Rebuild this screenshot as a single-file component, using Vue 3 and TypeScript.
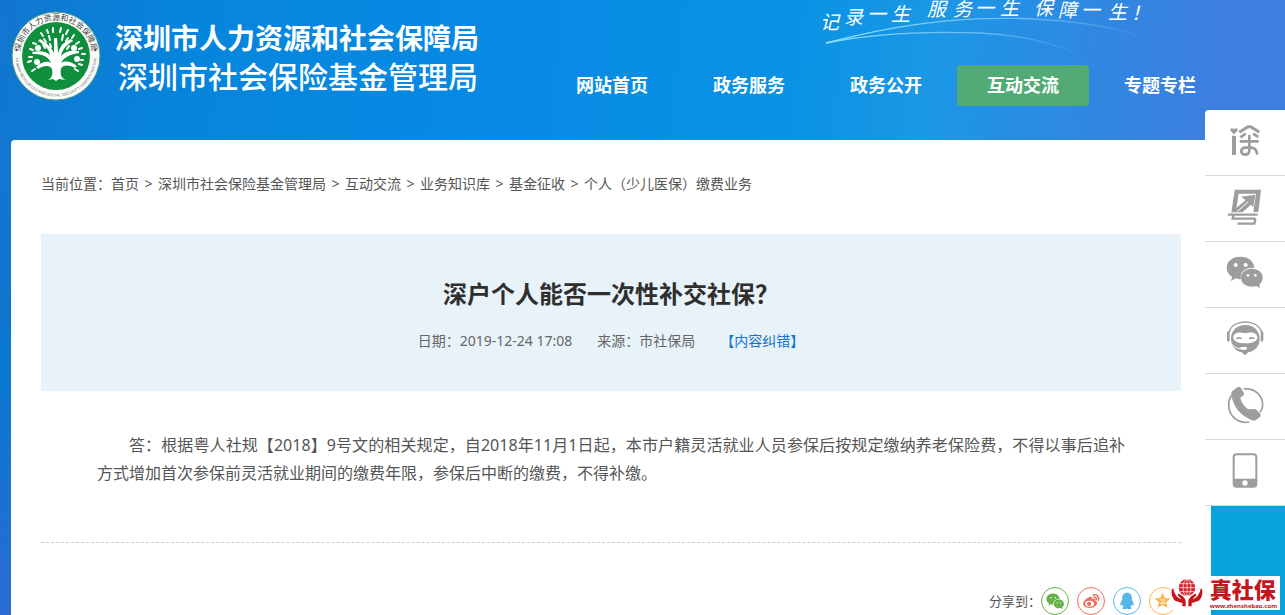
<script setup lang="ts">
interface NavItem {
  label: string
  active: boolean
}

const navItems: NavItem[] = [
  { label: '网站首页', active: false },
  { label: '政务服务', active: false },
  { label: '政务公开', active: false },
  { label: '互动交流', active: true },
  { label: '专题专栏', active: false },
]

const crumbs: string[] = [
  '首页',
  '深圳市社会保险基金管理局',
  '互动交流',
  '业务知识库',
  '基金征收',
  '个人（少儿医保）缴费业务',
]
</script>

<template>
  <div class="page">
    <header class="header">
      <svg class="slogan" viewBox="0 0 340 60" aria-hidden="true">
        <defs>
          <linearGradient id="arcFade" x1="0" x2="1" y1="0" y2="0">
            <stop offset="0" stop-color="#8fe0ff" />
            <stop offset="0.6" stop-color="#7cc4f5" stop-opacity="0.8" />
            <stop offset="1" stop-color="#7cc4f5" stop-opacity="0.1" />
          </linearGradient>
        </defs>
        <g fill="none" stroke="url(#arcFade)" stroke-width="1.3">
          <path d="M6 43C70 26 130 17 200 18.500C250 20 290 26 320 36" />
          <path d="M6 43C60 32 110 31 160 33C200 35 240 44 257 55" />
        </g>
        <text
          class="slogan-text"
          x="0 24 47 71 107 133 155 180 214 238 261 288 311"
          y="29 24 21 21 16 16 15 15 15 17 17 19 20"
        >记录一生服务一生保障一生！</text>
      </svg>

      <div class="brand">
        <svg class="emblem" viewBox="0 0 90 90" role="img" aria-label="深圳市人力资源和社会保障局">
          <defs>
            <path id="ringTop" d="M9 45A36 36 0 0 1 81 45" />
            <path id="ringBottom" d="M4.500 45A40.500 40.500 0 0 0 85.500 45" />
          </defs>
          <circle cx="45" cy="45" r="44" fill="#fbfdfb" stroke="#4d9b7c" stroke-width="1" />
          <circle cx="45" cy="45" r="34" fill="#0f8f3e" />
          <text class="ring-cn"><textPath href="#ringTop" startOffset="50%" text-anchor="middle">深圳市人力资源和社会保障局</textPath></text>
          <text class="ring-en"><textPath href="#ringBottom" startOffset="50%" text-anchor="middle">HUMAN RESOURCES AND SOCIAL SECURITY ADMINISTRATION</textPath></text>
          <circle cx="5.500" cy="39" r="1.200" fill="#445" />
          <circle cx="84.500" cy="39" r="1.200" fill="#445" />
          <path fill="#fff" d="M37 69C41 67 42 63 41 58C39 54 33 54 27 58L25 56C31 50 37 50 40 52C37 45 31 43 22 43L21 41C30 39 36 41 39 44C38 38 33 33 27 30L29 28C36 32 41 37 43 42L43 27L46 27L47 42C49 35 54 30 60 28L62 30C55 34 51 39 50 45C54 40 60 39 68 40L68 42C60 43 53 46 50 52C55 49 61 51 66 55L64 57C57 53 51 54 50 58C49 63 50 67 55 69L48 68L45 70L42 68Z" />
          <g fill="#fff">
            <circle cx="27" cy="37" r="3" /><circle cx="26" cy="51" r="3" />
            <circle cx="63" cy="37" r="3" /><circle cx="66" cy="48" r="3" />
          </g>
          <g fill="none" stroke="#fff" stroke-width="2" stroke-linecap="round">
            <path d="M30 22l2 3M36 19l1 3M42 17l0 4M50 17l-1 4M57 19l-2 4M63 24l-2 3M33 28l2 3M38 25l1 4M52 24l-1 5M57 27l-2 3M18 46l3 0M17 51l3-1M22 32l3 1M68 31l-3 2M71 37l-3 1M74 43l-3 0M71 54l-3-1M19 38l3 1M67 60l-3-2M21 60l3-2M39 33l1 3M52 34l-1 3M34 37l-2-4M58 35l-2 3M72 49l-2 0" />
          </g>
        </svg>
        <div class="brand-names">
          <div class="brand-main">深圳市人力资源和社会保障局</div>
          <div class="brand-sub">深圳市社会保险基金管理局</div>
        </div>
      </div>

      <nav class="nav" aria-label="主导航">
        <a
          v-for="item in navItems"
          :key="item.label"
          href="#"
          class="nav-link"
          :class="{ active: item.active }"
        >{{ item.label }}</a>
      </nav>
    </header>

    <main class="card">
      <nav class="crumbs" aria-label="当前位置">
        <span>当前位置：</span>
        <template v-for="(crumb, index) in crumbs" :key="crumb">
          <span v-if="index > 0" class="crumb-sep">&gt;</span>
          <a href="#">{{ crumb }}</a>
        </template>
      </nav>

      <section class="title-box">
        <h1>深户个人能否一次性补交社保？</h1>
        <div class="meta">
          <span>日期：2019-12-24 17:08</span>
          <span>来源：市社保局</span>
          <a href="#">【内容纠错】</a>
        </div>
      </section>

      <article class="article">
        <p>答：根据粤人社规【2018】9号文的相关规定，自2018年11月1日起，本市户籍灵活就业人员参保后按规定缴纳养老保险费，不得以事后追补方式增加首次参保前灵活就业期间的缴费年限，参保后中断的缴费，不得补缴。</p>
      </article>

      <div class="share">
        <span class="share-label">分享到：</span>
        <div class="share-links">
          <a href="#" class="share-link wechat" aria-label="微信">
            <svg viewBox="0 0 28 28">
              <path fill="currentColor" d="M12 6C7.500 6 4.800 8.800 4.800 12C4.800 14 6 15.600 7.500 16.600L7 19L9.700 17.600L12 18C12 14 15 11.300 19 11.500C18.500 8.300 15.500 6 12 6Z" />
              <path fill="currentColor" d="M18 12.500C14.800 12.500 12.700 14.600 12.700 17.200C12.700 19.800 15 21.800 18.100 21.800L19.900 21.500L22.200 22.600L21.700 20.700C22.900 19.900 23.700 18.600 23.700 17.200C23.700 14.600 21.200 12.500 18 12.500Z" />
              <g fill="#fff"><circle cx="9.800" cy="10.500" r="0.900" /><circle cx="14.200" cy="10.500" r="0.900" /><circle cx="16.400" cy="16" r="0.700" /><circle cx="19.900" cy="16" r="0.700" /></g>
            </svg>
          </a>
          <a href="#" class="share-link weibo" aria-label="微博">
            <svg viewBox="0 0 28 28">
              <path fill="currentColor" d="M12 10C14 9 15.500 9.500 15 11.800C18 11 19 12 18.300 13.500C20 14 21 15 20.500 17C19.500 20 16 21.500 12.500 21.500C8.500 21.500 5.500 19.500 5.500 17C5.500 14.500 8.500 11.500 12 10Z" />
              <ellipse cx="12.500" cy="17" rx="4.800" ry="3.300" fill="#fff" />
              <circle cx="12" cy="17.200" r="2.300" fill="currentColor" />
              <path fill="none" stroke="currentColor" stroke-width="1.800" stroke-linecap="round" d="M16.500 7.500C20.500 6.500 23 9.500 22 13M17 10C19 9.600 20 11 19.600 12.500" />
            </svg>
          </a>
          <a href="#" class="share-link qq" aria-label="QQ">
            <svg viewBox="0 0 28 28">
              <path fill="currentColor" d="M14 5C10.700 5 8.800 7.500 8.800 10.500L8.800 12.800C7.300 14.500 6.500 17 6.800 18.800C7.500 19.200 8.300 18.500 8.800 17.800C9.100 18.900 9.600 19.800 10.300 20.400C8.500 21 8.600 22.700 11 22.700C12.500 22.700 13.500 22.300 14 21.700C14.500 22.300 15.500 22.700 17 22.700C19.400 22.700 19.500 21 17.700 20.400C18.400 19.800 18.900 18.900 19.200 17.800C19.700 18.500 20.500 19.200 21.200 18.800C21.500 17 20.700 14.500 19.200 12.800L19.200 10.500C19.200 7.500 17.300 5 14 5Z" />
            </svg>
          </a>
          <a href="#" class="share-link qzone" aria-label="QQ空间">
            <svg viewBox="0 0 28 28">
              <path fill="currentColor" d="M13.500 5L16 10.700L22 11.300L17.500 15.400L18.800 21.400L13.500 18.300L8.200 21.400L9.500 15.400L5 11.300L11 10.700Z" />
              <path fill="none" stroke="#fff" stroke-width="0.900" d="M10.500 12.800H16L11.500 16.500H17" />
            </svg>
          </a>
        </div>
      </div>
    </main>

    <aside class="tools" aria-label="快捷工具">
      <a href="#" class="tool" aria-label="i深圳">
        <svg viewBox="90 67 120 120">
          <path fill="currentColor" d="M117 101L107 91C103 85 111 79 117 86C123 79 131 85 127 91ZM111 105H123V163H111Z" />
          <g fill="none" stroke="currentColor" stroke-width="9" stroke-linejoin="round">
            <path d="M133 95L154 81Q163 76 172 81L193 95" />
            <path d="M136 110L152 99M174 99L190 109M134 122H191M163 103V150Q162 162 150 162Q139 161 139 151Q140 141 151 141H170Q184 142 187 162" stroke-width="8" />
          </g>
        </svg>
      </a>
      <a href="#" class="tool" aria-label="粤省事">
        <svg viewBox="90 265 120 120">
          <path fill="currentColor" d="M119 267H198L190 334H175L183 279H131L124 326L109 336Z" />
          <path fill="currentColor" d="M181 282L175 320L168 312L142 335H109L152 298L138 288Z" />
          <path fill="none" stroke="#fff" stroke-width="3" d="M126 333L160 303" />
          <path fill="none" stroke="currentColor" stroke-width="7" d="M99 342H188M116 342L113 354H178Q182 355 180 361L178 369H128" />
        </svg>
      </a>
      <a href="#" class="tool" aria-label="微信">
        <svg viewBox="90 463 120 120">
          <path fill="currentColor" d="M137 468C112 468 95 482 95 501C95 513 101 522 111 528L108 541L122 533C127 535 132 536 138 535C133 515 149 500 178 501C176 481 160 468 137 468Z" />
          <path fill="currentColor" d="M171 504C152 504 138 515 138 531C138 547 152 558 171 558C176 558 180 557 184 556L195 562L193 551C200 546 203 539 203 531C203 515 189 504 171 504Z" />
          <g fill="#fff"><circle cx="122" cy="493" r="6" /><circle cx="152" cy="493" r="6" /><circle cx="159" cy="524" r="4" /><circle cx="181" cy="524" r="4" /></g>
        </svg>
      </a>
      <a href="#" class="tool" aria-label="智能客服">
        <svg viewBox="90 61 120 120">
          <path fill="none" stroke="currentColor" stroke-width="4" d="M103 94C110 54 191 54 199 94" />
          <path fill="currentColor" d="M96 96Q96 92 101 91L104 96V121L100 123Q96 122 96 117ZM205 96Q205 92 200 91L197 96V121L201 123Q205 122 205 117Z" />
          <path fill="currentColor" d="M151 73C126 73 108 90 108 115C108 137 122 151 140 155L150 164L160 155C180 151 194 137 194 115C194 90 176 73 151 73Z" />
          <path fill="#fff" d="M151 98C170 92 187 97 187 110C187 123 172 128 151 128C130 128 115 123 115 110C115 97 132 92 151 98Z" />
          <path fill="none" stroke="currentColor" stroke-width="5" stroke-linecap="round" d="M126 113Q132 110 138 113M164 113Q170 110 176 113" />
          <path fill="none" stroke="#fff" stroke-width="3" stroke-linecap="round" d="M108 128Q118 143 136 144H152" />
          <rect x="136" y="139" width="20" height="8" rx="4" fill="#fff" />
        </svg>
      </a>
      <a href="#" class="tool" aria-label="电话">
        <svg viewBox="90 259 120 120">
          <path fill="none" stroke="currentColor" stroke-width="5" d="M146 265C183 260 207 291 202 319C200 327 198 331 195 335M163 364C128 370 101 345 101 313C101 301 104 291 110 284" />
          <path fill="currentColor" d="M113 270L128 259Q134 257 138 262L147 278Q148 283 143 286L136 291Q139 309 158 325L168 326L176 325Q180 324 184 327L196 339Q199 344 195 348L184 357Q177 362 167 357C132 341 113 313 109 282Q108 274 113 270Z" />
        </svg>
      </a>
      <a href="#" class="tool" aria-label="手机版">
        <svg viewBox="90 457 120 120">
          <path fill="currentColor" fill-rule="evenodd" d="M124 458H176Q187 458 187 470V549Q187 561 176 561H124Q113 561 113 549V470Q113 458 124 458ZM125 464Q119 464 119 471V534H181V471Q181 464 175 464Z" />
          <circle cx="150" cy="547" r="8" fill="#fff" />
        </svg>
      </a>
    </aside>

    <a href="#" class="badge">
      <svg class="badge-logo" viewBox="0 0 96 84" aria-hidden="true">
        <circle cx="48" cy="26" r="25" fill="#d4232b" />
        <g fill="none" stroke="#fff" stroke-width="2">
          <path d="M23 26H73M27 14H69M27 38H69M48 1V51" />
          <ellipse cx="48" cy="26" rx="12" ry="25" />
        </g>
        <g fill="#c4161c">
          <path d="M3 29C0 44 3 58 14 66L34 72V82H44V66C43 58 34 50 25 45C21 43 18 47 22 51L31 60C20 58 11 47 7 29Z" />
          <path d="M93 29C96 44 93 58 82 66L62 72V82H52V66C53 58 62 50 71 45C75 43 78 47 74 51L65 60C76 58 85 47 89 29Z" />
        </g>
      </svg>
      <span class="badge-text">
        <strong>真社保</strong>
        <small>www.zhenshebao.com</small>
      </span>
    </a>
  </div>
</template>

<style>
body {
  margin: 0;
}
</style>

<style scoped>
.page {
  position: relative;
  box-sizing: border-box;
  min-height: 100vh;
  display: flex;
  flex-direction: column;
  overflow: hidden;
  font-family: "Noto Sans", "Noto Sans CJK SC", sans-serif;
  color: #555;
  background:
    linear-gradient(180deg, #1377d0 140px, #0d76cb 310px, #0b78d0 380px, #2a6bd0 615px) left / 50% 100% no-repeat,
    #08a2dc;
}

a {
  color: inherit;
  text-decoration: none;
}

.header {
  position: relative;
  box-sizing: border-box;
  min-height: 140px;
  display: flex;
  justify-content: space-between;
  align-items: flex-start;
  padding: 0 59px 0 11px;
  background: linear-gradient(97deg, #1176cf 0%, #0685dc 15%, #078ae5 40%, #0a92e4 62%, #1b98e5 72%, #2f88e2 84%, #3e7ee0 95%, #3e7ee0 100%);
}

.slogan {
  position: absolute;
  top: 0;
  right: 125px;
  width: 340px;
  height: 60px;
}

.slogan-text {
  font-family: "Noto Sans CJK SC", sans-serif;
  font-size: 19px;
  font-style: italic;
  font-weight: 400;
  fill: #fff;
}

.brand {
  display: flex;
  gap: 14px;
  padding-top: 11px;
}

.emblem {
  width: 90px;
  height: 90px;
}

.ring-cn {
  font-family: "Noto Sans CJK SC", sans-serif;
  font-size: 8px;
  fill: #444;
}

.ring-en {
  font-family: "Liberation Sans", sans-serif;
  font-size: 4px;
  fill: #777;
}

.brand-names {
  padding-top: 9px;
  color: #fff;
  white-space: nowrap;
}

.brand-main {
  font-size: 28px;
  line-height: 36px;
  font-weight: 700;
}

.brand-sub {
  padding-left: 3px;
  font-family: "Noto Sans CJK SC", sans-serif;
  font-size: 30px;
  line-height: 38px;
  font-weight: 500;
}

.nav {
  display: flex;
  gap: 5px;
  padding-top: 65px;
}

.nav-link {
  width: 132px;
  border-radius: 3px;
  color: #fff;
  font-size: 18px;
  font-weight: 700;
  line-height: 41px;
  text-align: center;
  white-space: nowrap;
}

.nav-link.active {
  background: #52ab74;
}

.card {
  flex: 1;
  margin: 0 74px 0 11px;
  padding: 30px 30px 0;
  background: #fff;
  border-top-left-radius: 4px;
}

.crumbs {
  display: flex;
  flex-wrap: wrap;
  font-size: 14px;
  line-height: 28px;
}

.crumb-sep {
  width: 19px;
  text-align: center;
}

.title-box {
  margin-top: 36px;
  padding: 40px 20px 36px;
  background: #e7f2f9;
  text-align: center;
}

h1 {
  margin: 0;
  color: #2f2f2f;
  font-size: 24px;
  line-height: 40px;
  font-weight: 700;
}

.meta {
  display: flex;
  justify-content: center;
  gap: 25px;
  margin-top: 13px;
  color: #666;
  font-size: 14px;
  line-height: 28px;
}

.meta a {
  color: #1173d8;
}

.article {
  padding: 40px 56px 55px;
  border-bottom: 1px dashed #ccc;
  color: #555;
  font-size: 16px;
  line-height: 28px;
}

.article p {
  margin: 0;
  text-indent: 2em;
  text-align: justify;
}

.share {
  display: flex;
  justify-content: flex-end;
  align-items: center;
  padding: 44px 4px 0 0;
}

.share-label {
  font-size: 13px;
  line-height: 28px;
}

.share-links {
  display: flex;
  gap: 8px;
}

.share-link {
  box-sizing: border-box;
  width: 28px;
  height: 28px;
  border: 1px solid currentColor;
  border-radius: 50%;
}

.share-link svg {
  display: block;
  width: 26px;
  height: 26px;
}

.wechat {
  color: #67b14b;
}

.weibo {
  color: #ec6f5c;
}

.qq {
  color: #56b6e7;
}

.qzone {
  color: #f8b551;
}

.tools {
  position: absolute;
  top: 110px;
  right: 0;
  width: 80px;
  background: #fff;
  border-top-left-radius: 4px;
}

.tool {
  box-sizing: border-box;
  height: 66px;
  display: flex;
  align-items: center;
  justify-content: center;
  border-bottom: 1px solid #d9d9d9;
  color: #9d9d9d;
}

.tool svg {
  width: 40px;
  height: 40px;
}

.badge {
  position: absolute;
  right: 5px;
  bottom: 5px;
  display: flex;
  align-items: center;
  gap: 7px;
  padding: 0 3px 0 0;
  background: #fff;
  color: #c4161c;
}

.badge-logo {
  width: 32px;
  height: 28px;
}

.badge-text {
  display: flex;
  flex-direction: column;
}

.badge strong {
  font-size: 22px;
  line-height: 26px;
  font-weight: 900;
}

.badge small {
  font-size: 6px;
  line-height: 8px;
  font-weight: 700;
}
</style>
